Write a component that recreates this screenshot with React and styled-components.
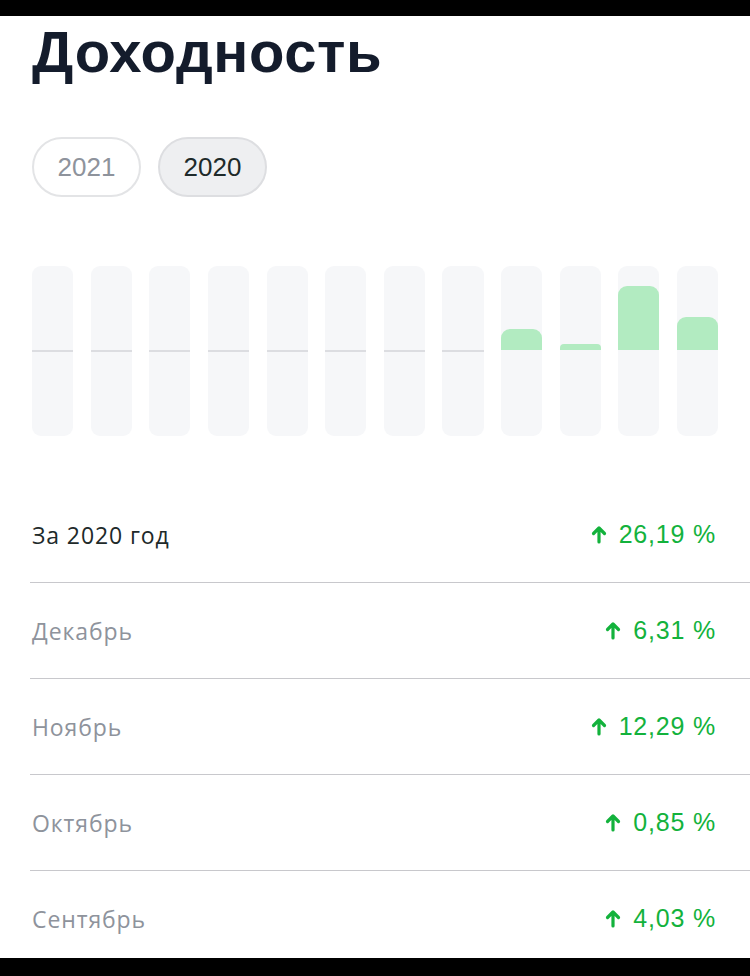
import styled, { createGlobalStyle } from "styled-components";

const GlobalStyle = createGlobalStyle`
  html, body {
    margin: 0;
    padding: 0;
    background: #000;
  }
  body {
    font-family: "Liberation Sans", Arial, sans-serif;
  }
`;

const Screen = styled.div`
  margin-top: 16px;
  height: 942px;
  background: #fff;
  overflow: hidden;
`;

const Title = styled.h1`
  margin: 0;
  padding: 2px 0 0 32px;
  font-size: 58px;
  line-height: 68px;
  font-weight: 700;
  color: #141c2c;
  letter-spacing: 0.6px;
`;

const Chips = styled.div`
  display: flex;
  gap: 17px;
  padding: 51px 32px 0;
`;

const Chip = styled.button`
  width: 109px;
  height: 60px;
  border-radius: 30px;
  border: 2px solid ${(p) => (p.$active ? "#dddee1" : "#e3e4e6")};
  background: ${(p) => (p.$active ? "#eeeff1" : "#fff")};
  color: ${(p) => (p.$active ? "#1e2a2a" : "#8e939c")};
  font-family: inherit;
  font-size: 26px;
  padding: 0;
`;

const Chart = styled.div`
  display: grid;
  grid-template-columns: repeat(12, 1fr);
  column-gap: 17.5px;
  padding: 69px 32px 0;
`;

const Bar = styled.div`
  height: 170px;
  border-radius: 9px;
  background: #f6f7f9;
  display: flex;
  flex-direction: column;
`;

const Upper = styled.div`
  height: 84px;
  display: flex;
  flex-direction: column;
  justify-content: flex-end;
  border-bottom: 2px solid ${(p) => (p.$empty ? "#dcdde1" : "transparent")};
`;

const Fill = styled.div`
  background: #b2ebc1;
  border-radius: ${(p) => (p.$small ? "4px 4px 0 0" : "9px 9px 0 0")};
`;

const List = styled.div`
  padding-top: 51px;
  margin-left: 30px;
`;

const Row = styled.div`
  display: flex;
  align-items: center;
  justify-content: space-between;
  height: 95px;
  padding: 0 34px 0 2px;
  border-top: ${(p) => (p.$first ? "none" : "1px solid #c8c8cc")};
`;

const Label = styled.span`
  font-size: 23px;
  letter-spacing: 0.9px;
  color: ${(p) => (p.$strong ? "#1e2a2a" : "#8e939c")};
  font-family: "Open Sans", "Liberation Sans", sans-serif;
`;

const Value = styled.span`
  display: flex;
  align-items: center;
  gap: 12px;
  font-size: 25px;
  letter-spacing: 0.8px;
  color: #13b23c;
`;

const Arrow = () => (
  <svg width="16" height="19" viewBox="0 0 16 19">
    <path
      d="M8 17V3M2.5 8.5L8 3l5.5 5.5"
      fill="none"
      stroke="#13b23c"
      strokeWidth="3.2"
      strokeLinecap="round"
      strokeLinejoin="round"
    />
  </svg>
);

const bars = [0, 0, 0, 0, 0, 0, 0, 0, 21, 6, 64, 33];

const rows = [
  { label: "За 2020 год", value: "26,19 %", strong: true },
  { label: "Декабрь", value: "6,31 %" },
  { label: "Ноябрь", value: "12,29 %" },
  { label: "Октябрь", value: "0,85 %" },
  { label: "Сентябрь", value: "4,03 %" },
];

export default function App() {
  return (
    <>
      <GlobalStyle />
      <Screen>
        <Title>Доходность</Title>
        <Chips>
          <Chip>2021</Chip>
          <Chip $active>2020</Chip>
        </Chips>
        <Chart>
          {bars.map((h, i) => (
            <Bar key={i}>
              <Upper $empty={h === 0}>
                {h > 0 && <Fill $small={h < 10} style={{ height: h }} />}
              </Upper>
            </Bar>
          ))}
        </Chart>
        <List>
          {rows.map((r, i) => (
            <Row key={r.label} $first={i === 0}>
              <Label $strong={r.strong}>{r.label}</Label>
              <Value>
                <Arrow />
                {r.value}
              </Value>
            </Row>
          ))}
        </List>
      </Screen>
    </>
  );
}
